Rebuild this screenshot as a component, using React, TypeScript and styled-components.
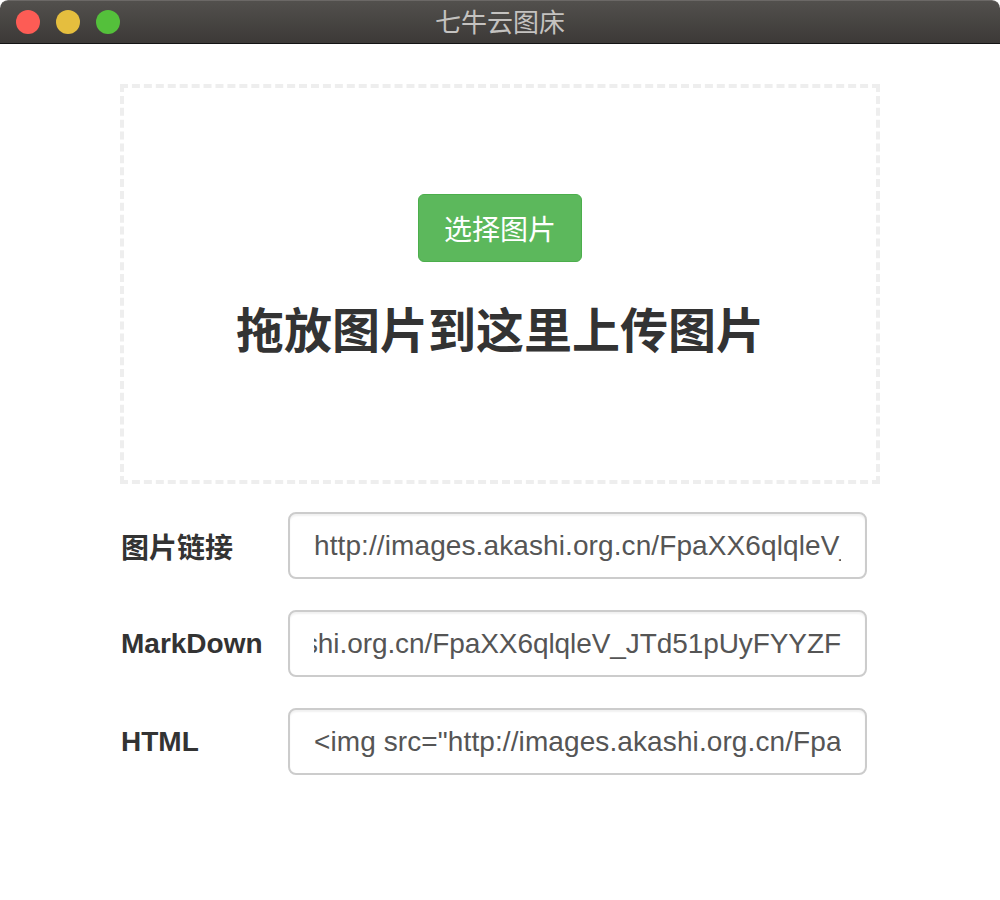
import React from "react";
import styled, { createGlobalStyle } from "styled-components";

const Global = createGlobalStyle`
  html, body { margin: 0; padding: 0; background: #ffffff; }
  body { font-family: "Liberation Sans", "Noto Sans CJK SC", sans-serif; }
  * { box-sizing: border-box; }
`;

const Window = styled.div`
  width: 1000px;
  height: 900px;
  display: flex;
  flex-direction: column;
  background: #ffffff;
  overflow: hidden;
  border-radius: 8px 8px 6px 6px;
`;

const TitleBar = styled.div`
  position: relative;
  height: 44px;
  flex: none;
  display: flex;
  align-items: center;
  justify-content: center;
  background: linear-gradient(#52504d, #3c3937);
  border-top: 1px solid #6b6866;
  border-bottom: 1px solid #141414;
  border-radius: 8px 8px 0 0;
`;

const Lights = styled.div`
  position: absolute;
  left: 16px;
  top: 9px;
  display: flex;
  gap: 16px;
`;

const Light = styled.span<{ $c: string }>`
  width: 24px;
  height: 24px;
  border-radius: 50%;
  background: ${(p) => p.$c};
`;

const Title = styled.div`
  font-family: "Noto Sans CJK SC", sans-serif;
  font-size: 26px;
  color: #c4c2c0;
  line-height: 1;
  margin-top: -2px;
`;

const Content = styled.div`
  flex: 1;
  padding: 40px 120px 0;
  display: flex;
  flex-direction: column;
`;

const DropZone = styled.div`
  height: 400px;
  border: 4px dashed #eeeeee;
  display: flex;
  flex-direction: column;
  align-items: center;
  padding-top: 106px;
`;

const PickButton = styled.button`
  font-family: "Noto Sans CJK SC", sans-serif;
  font-size: 28px;
  line-height: 40px;
  color: #ffffff;
  background: #5cb85c;
  border: 1px solid #4cae4c;
  border-radius: 6px;
  padding: 13px 25px;
  cursor: pointer;
`;

const Heading = styled.h1`
  margin: 37px 0 0;
  font-family: "Noto Sans CJK SC", sans-serif;
  font-weight: 700;
  font-size: 48px;
  line-height: 56px;
  color: #333333;
`;

const Form = styled.div`
  margin-top: 28px;
  display: flex;
  flex-direction: column;
  gap: 31px;
`;

const Row = styled.div`
  display: grid;
  grid-template-columns: 168px 579px;
  align-items: center;
`;

const Label = styled.div`
  font-family: "Liberation Sans", "Noto Sans CJK SC", sans-serif;
  font-weight: 700;
  font-size: 28px;
  color: #333333;
  padding-left: 1px;
  white-space: nowrap;
`;

const Field = styled.div`
  height: 67px;
  border: 2px solid #cccccc;
  border-radius: 8px;
  padding: 0 24px;
  display: flex;
  align-items: center;
  box-shadow: inset 0 2px 2px rgba(0, 0, 0, 0.06);
`;

const FieldText = styled.div<{ $end?: boolean }>`
  flex: 1;
  overflow: hidden;
  white-space: nowrap;
  display: flex;
  justify-content: ${(p) => (p.$end ? "flex-end" : "flex-start")};
  font-family: "Liberation Sans", sans-serif;
  font-size: 28px;
  color: #555555;
  line-height: 36px;
  letter-spacing: ${(p) => (p.$end ? "-0.08px" : "0.1px")};
`;

const url = "http://images.akashi.org.cn/FpaXX6qlqleV_JTd51pUyFYYZF";

export default function App() {
  return (
    <>
      <Global />
      <Window>
        <TitleBar>
          <Lights>
            <Light $c="#fd5c55" />
            <Light $c="#e5be3e" />
            <Light $c="#54c03b" />
          </Lights>
          <Title>七牛云图床</Title>
        </TitleBar>
        <Content>
          <DropZone>
            <PickButton>选择图片</PickButton>
            <Heading>拖放图片到这里上传图片</Heading>
          </DropZone>
          <Form>
            <Row>
              <Label>图片链接</Label>
              <Field>
                <FieldText>
                  <span>{url}</span>
                </FieldText>
              </Field>
            </Row>
            <Row>
              <Label>MarkDown</Label>
              <Field>
                <FieldText $end>
                  <span>{`![](${url}`}</span>
                </FieldText>
              </Field>
            </Row>
            <Row>
              <Label>HTML</Label>
              <Field>
                <FieldText>
                  <span>{`<img src="${url}" />`}</span>
                </FieldText>
              </Field>
            </Row>
          </Form>
        </Content>
      </Window>
    </>
  );
}
